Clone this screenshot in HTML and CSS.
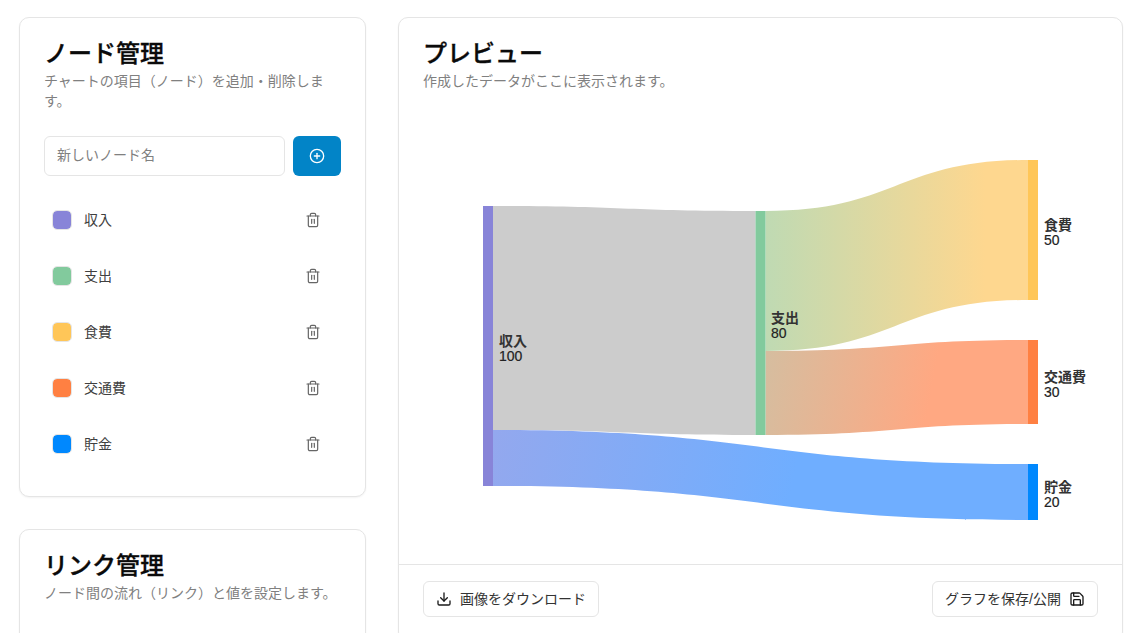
FILE: index.html
```html
<!DOCTYPE html>
<html lang="ja">
<head>
<meta charset="utf-8">
<title>サンキー</title>
<link rel="stylesheet" href="styles.css">
</head>
<body>
<main class="layout">
  <div class="sidebar">
    <section class="card">
      <header class="card-head">
        <h2 class="title">ノード管理</h2>
        <p class="desc">チャートの項目（ノード）を追加・削除します。</p>
      </header>
      <div class="card-body">
        <div class="add-row">
          <input class="text-input" type="text" placeholder="新しいノード名">
          <button class="add-btn" aria-label="追加">
            <svg class="icon" viewBox="0 0 24 24"><circle cx="12" cy="12" r="10"/><path d="M8 12h8"/><path d="M12 8v8"/></svg>
          </button>
        </div>
        <ul class="node-list">
          <li class="node-row"><span class="swatch c1"></span><span class="node-name">収入</span><svg class="icon trash" viewBox="0 0 24 24"><path d="M3 6h18"/><path d="M19 6v14c0 1-1 2-2 2H7c-1 0-2-1-2-2V6"/><path d="M8 6V4c0-1 1-2 2-2h4c1 0 2 1 2 2v2"/><path d="M10 11v6"/><path d="M14 11v6"/></svg></li>
          <li class="node-row"><span class="swatch c2"></span><span class="node-name">支出</span><svg class="icon trash" viewBox="0 0 24 24"><path d="M3 6h18"/><path d="M19 6v14c0 1-1 2-2 2H7c-1 0-2-1-2-2V6"/><path d="M8 6V4c0-1 1-2 2-2h4c1 0 2 1 2 2v2"/><path d="M10 11v6"/><path d="M14 11v6"/></svg></li>
          <li class="node-row"><span class="swatch c3"></span><span class="node-name">食費</span><svg class="icon trash" viewBox="0 0 24 24"><path d="M3 6h18"/><path d="M19 6v14c0 1-1 2-2 2H7c-1 0-2-1-2-2V6"/><path d="M8 6V4c0-1 1-2 2-2h4c1 0 2 1 2 2v2"/><path d="M10 11v6"/><path d="M14 11v6"/></svg></li>
          <li class="node-row"><span class="swatch c4"></span><span class="node-name">交通費</span><svg class="icon trash" viewBox="0 0 24 24"><path d="M3 6h18"/><path d="M19 6v14c0 1-1 2-2 2H7c-1 0-2-1-2-2V6"/><path d="M8 6V4c0-1 1-2 2-2h4c1 0 2 1 2 2v2"/><path d="M10 11v6"/><path d="M14 11v6"/></svg></li>
          <li class="node-row"><span class="swatch c5"></span><span class="node-name">貯金</span><svg class="icon trash" viewBox="0 0 24 24"><path d="M3 6h18"/><path d="M19 6v14c0 1-1 2-2 2H7c-1 0-2-1-2-2V6"/><path d="M8 6V4c0-1 1-2 2-2h4c1 0 2 1 2 2v2"/><path d="M10 11v6"/><path d="M14 11v6"/></svg></li>
        </ul>
      </div>
    </section>
    <section class="card">
      <header class="card-head">
        <h2 class="title">リンク管理</h2>
        <p class="desc">ノード間の流れ（リンク）と値を設定します。</p>
      </header>
      <div class="card-body link-body"></div>
    </section>
  </div>

  <section class="card preview">
    <header class="card-head">
      <h2 class="title">プレビュー</h2>
      <p class="desc">作成したデータがここに表示されます。</p>
    </header>
    <div class="chart">
      <svg class="sankey" viewBox="399 115 723 449" width="723" height="449">
        <defs>
          <linearGradient id="g-save" gradientUnits="userSpaceOnUse" x1="493" y1="440" x2="790" y2="500">
            <stop offset="0" stop-color="#93a8ee"/>
            <stop offset="1" stop-color="#6faeff"/>
          </linearGradient>
          <linearGradient id="g-food" gradientUnits="userSpaceOnUse" x1="765" y1="230" x2="985" y2="230">
            <stop offset="0" stop-color="#bfdab3"/>
            <stop offset="1" stop-color="#fed78f"/>
          </linearGradient>
          <linearGradient id="g-trans" gradientUnits="userSpaceOnUse" x1="765" y1="370" x2="930" y2="400">
            <stop offset="0" stop-color="#d6bd9f"/>
            <stop offset="1" stop-color="#ffa882"/>
          </linearGradient>
        </defs>
        <path fill="#cccccc" d="M493 206C624.5 206 624.5 211 755.5 211V435C624.5 435 624.5 430 493 430Z"/>
        <path fill="url(#g-save)" d="M493 430C760.5 430 760.5 464 1028 464V520C760.5 520 760.5 486 493 486Z"/>
        <path fill="url(#g-food)" d="M765.5 211C896.75 211 896.75 160 1028 160V300C896.75 300 896.75 351 765.5 351Z"/>
        <path fill="url(#g-trans)" d="M765.5 351C896.75 351 896.75 340 1028 340V424C896.75 424 896.75 435 765.5 435Z"/>
        <rect class="n1" x="483" y="206" width="10" height="280"/>
        <rect class="n2" x="755.5" y="211" width="10" height="224"/>
        <rect class="n3" x="1028" y="160" width="10" height="140"/>
        <rect class="n4" x="1028" y="340" width="10" height="84"/>
        <rect class="n5" x="1028" y="464" width="10" height="56"/>
        <text class="lbl" x="499" y="346">収入</text><text class="val" x="499" y="361">100</text>
        <text class="lbl" x="771" y="323">支出</text><text class="val" x="771" y="338">80</text>
        <text class="lbl" x="1044" y="230">食費</text><text class="val" x="1044" y="245">50</text>
        <text class="lbl" x="1044" y="382">交通費</text><text class="val" x="1044" y="397">30</text>
        <text class="lbl" x="1044" y="492">貯金</text><text class="val" x="1044" y="507">20</text>
      </svg>
    </div>
    <footer class="foot">
      <button class="ghost-btn">
        <svg class="icon dark" viewBox="0 0 24 24"><path d="M21 15v4a2 2 0 0 1-2 2H5a2 2 0 0 1-2-2v-4"/><path d="M7 10l5 5 5-5"/><path d="M12 15V3"/></svg>
        <span class="btn-text">画像をダウンロード</span>
      </button>
      <button class="ghost-btn">
        <span class="btn-text">グラフを保存/公開</span>
        <svg class="icon dark" viewBox="0 0 24 24"><path d="M15.2 3a2 2 0 0 1 1.4.6l3.8 3.8a2 2 0 0 1 .6 1.4V19a2 2 0 0 1-2 2H5a2 2 0 0 1-2-2V5a2 2 0 0 1 2-2z"/><path d="M17 21v-7a1 1 0 0 0-1-1H8a1 1 0 0 0-1 1v7"/><path d="M7 3v4a1 1 0 0 0 1 1h7"/></svg>
      </button>
    </footer>
  </section>
</main>
</body>
</html>
```
FILE: styles.css
```css
* { box-sizing: border-box; }
html, body { margin: 0; height: 633px; overflow: hidden; background: #fff; }
body { font-family: "Liberation Sans", "Noto Sans CJK JP", sans-serif; color: #0a0a0a; }
.layout {
  display: grid;
  grid-template-columns: 347px 725px;
  column-gap: 32px;
  align-items: start;
  padding: 17px 10px 0 19px;
}
.sidebar { display: flex; flex-direction: column; gap: 32px; }
.card {
  background: #fff;
  border: 1px solid #e5e5e5;
  border-radius: 10px;
  box-shadow: 0 1px 2px rgba(0, 0, 0, .05);
}
.card-head { padding: 24px 24px 25px; }
.title { margin: 0; font-size: 24px; line-height: 24px; font-weight: 500; -webkit-text-stroke: .35px #0a0a0a; }
.desc { margin: 5px 0 0; font-size: 14px; line-height: 20px; color: #808080; }
.card-body { padding: 0 24px 24px; }
.link-body { height: 200px; }
.add-row { display: flex; gap: 8px; margin-bottom: 16px; }
.text-input {
  flex: 1;
  min-width: 0;
  height: 40px;
  padding: 0 12px 3px;
  border: 1px solid #e5e5e5;
  border-radius: 6px;
  font: 14px "Liberation Sans", "Noto Sans CJK JP", sans-serif;
  background: #fff;
}
.text-input::placeholder { color: #808080; opacity: 1; }
.add-btn {
  width: 48px;
  height: 40px;
  display: flex;
  align-items: center;
  justify-content: center;
  padding: 0;
  border: 0;
  border-radius: 6px;
  background: #0284c7;
  color: #fff;
}
.icon { width: 16px; height: 16px; fill: none; stroke: currentColor; stroke-width: 2; stroke-linecap: round; stroke-linejoin: round; flex: none; }
.trash { color: #666; stroke-width: 1.8; margin-left: auto; margin-right: 20px; }
.dark { color: #1a1a1a; }
.node-list { list-style: none; margin: 0; padding: 0; }
.node-row { height: 56px; display: flex; align-items: center; padding-left: 8px; gap: 12px; font-size: 14px; color: #404040; }
.node-name { padding-bottom: 2px; }
.swatch { width: 20px; height: 20px; border-radius: 5px; border: 1px solid #e5e5e5; background-clip: padding-box; }
.c1 { background-color: #8884d8; }
.c2 { background-color: #82ca9d; }
.c3 { background-color: #ffc658; }
.c4 { background-color: #ff8042; }
.c5 { background-color: #0088fe; }
.preview { display: flex; flex-direction: column; }
.preview .card-head { padding-bottom: 24px; }
.chart { height: 449px; flex: none; }
.sankey { display: block; }
.n1 { fill: #8884d8; }
.n2 { fill: #82ca9d; }
.n3 { fill: #ffc658; }
.n4 { fill: #ff8042; }
.n5 { fill: #0088fe; }
.lbl { font: 700 14px "Liberation Sans", "Noto Sans CJK JP", sans-serif; fill: #333; }
.val { font: 400 14px "Liberation Sans", "Noto Sans CJK JP", sans-serif; fill: #222; stroke: #222; stroke-width: .2; }
.foot {
  display: flex;
  justify-content: space-between;
  padding: 16px 24px 24px;
  border-top: 1px solid #e5e5e5;
}
.ghost-btn {
  height: 36px;
  display: flex;
  align-items: center;
  gap: 8px;
  padding: 0 12px;
  background: #fff;
  border: 1px solid #e5e5e5;
  border-radius: 6px;
  font: 14px "Liberation Sans", "Noto Sans CJK JP", sans-serif;
  color: #333;
}
.btn-text { padding-bottom: 3px; }
```
